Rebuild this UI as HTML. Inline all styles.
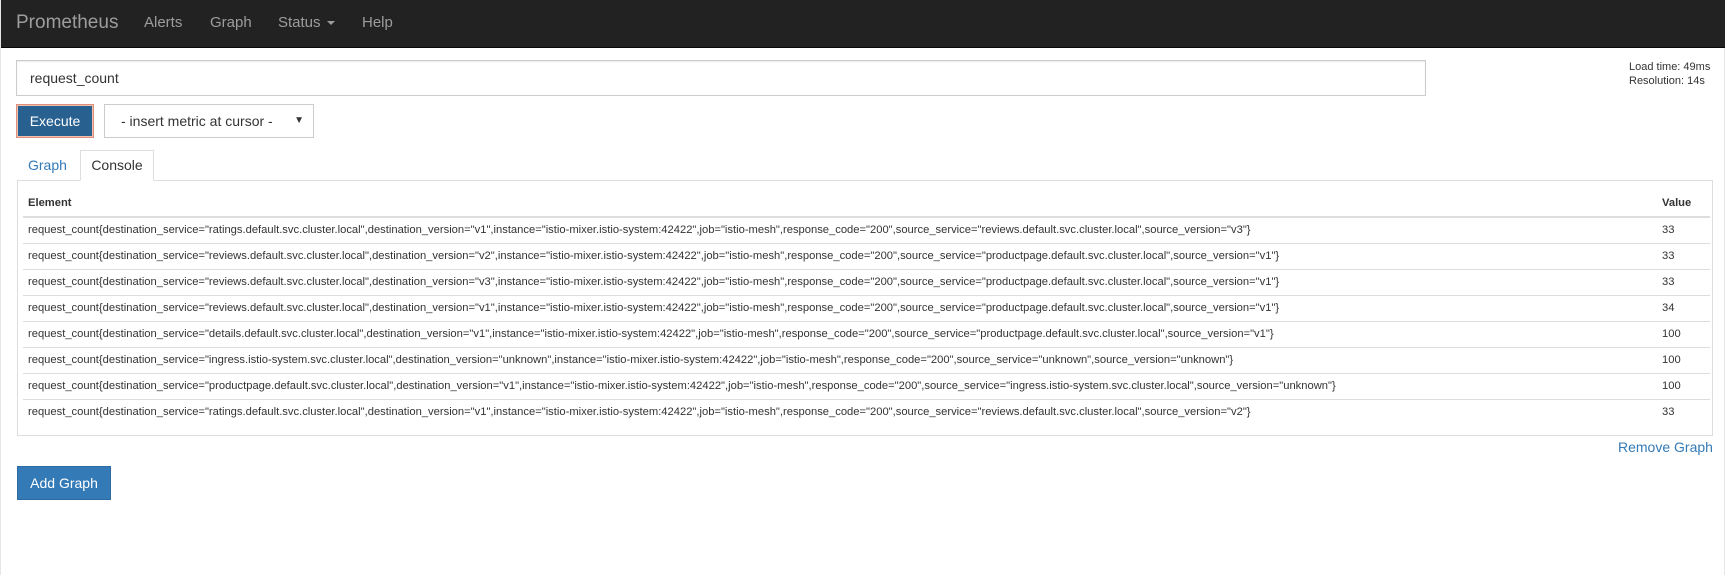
<!DOCTYPE html>
<html><head><style>
*{box-sizing:border-box;margin:0;padding:0}
body{width:1725px;height:575px;background:#fff;font-family:"Liberation Sans",Arial,sans-serif;color:#333;position:relative;overflow:hidden;border-left:1px solid #e6e6e6;border-right:1px solid #e6e6e6}
.a{position:absolute;white-space:nowrap}
.nav{position:absolute;left:0;top:0;width:1725px;height:48px;background:#222;border-bottom:1px solid #080808}
.nav span{position:absolute;top:0;line-height:46px;color:#9d9d9d;font-size:15px}
.row{position:absolute;left:22px;width:1687px;height:26px;border-top:1px solid #ddd;font-size:11.2px;line-height:25px}
.row .e{position:absolute;left:5px}
.row .v{position:absolute;left:1639px}
</style></head><body>
<div class="nav">
<span style="left:15px;font-size:19px">Prometheus</span>
<span style="left:143px">Alerts</span>
<span style="left:209px">Graph</span>
<span style="left:277px">Status <span style="position:relative;display:inline-block;width:0;height:0;border-left:4px solid transparent;border-right:4px solid transparent;border-top:4px solid #9d9d9d;top:-2px;margin-left:2px;line-height:0"></span></span>
<span style="left:361px">Help</span>
</div>
<div class="a" style="left:15px;top:60px;width:1410px;height:36px;border:1px solid #ccc;box-shadow:inset 0 1px 1px rgba(0,0,0,.075);font-size:14px;line-height:34px;padding-left:13px">request_count</div>
<div class="a" style="left:1628px;top:60px;font-size:11px;line-height:14px">Load time: 49ms<br>Resolution: 14s</div>
<div class="a" style="left:15px;top:104px;width:78px;height:34px;background:#286090;border:1px solid #e08e79;box-shadow:0 0 0 1px #f0c0b0 inset;color:#fff;font-size:14px;line-height:32px;text-align:center">Execute</div>
<div class="a" style="left:103px;top:104px;width:210px;height:34px;border:1px solid #ccc;font-size:14px;line-height:32px;padding-left:16px">- insert metric at cursor -<span style="position:absolute;right:9px;font-size:10px">▼</span></div>
<div class="a" style="left:27px;top:151px;font-size:14px;line-height:29px;color:#337ab7">Graph</div>
<div class="a" style="left:79px;top:150px;width:74px;height:31px;border:1px solid #ddd;border-bottom-color:#fff;background:#fff;font-size:14px;line-height:29px;text-align:center;z-index:2">Console</div>
<div class="a" style="left:16px;top:180px;width:1696px;height:256px;border:1px solid #ddd"></div>
<div class="a" style="left:27px;top:195px;font-size:11.2px;font-weight:bold;line-height:16px">Element</div>
<div class="a" style="left:1661px;top:195px;font-size:11.2px;font-weight:bold;line-height:16px">Value</div>
<div class="a" style="left:22px;top:216px;width:1687px;height:2px;background:#ddd"></div>
<div class="row" style="top:218px;border-top:none"><span class="e">request_count{destination_service="ratings.default.svc.cluster.local",destination_version="v1",instance="istio-mixer.istio-system:42422",job="istio-mesh",response_code="200",source_service="reviews.default.svc.cluster.local",source_version="v3"}</span><span class="v">33</span></div>
<div class="row" style="top:243px"><span class="e">request_count{destination_service="reviews.default.svc.cluster.local",destination_version="v2",instance="istio-mixer.istio-system:42422",job="istio-mesh",response_code="200",source_service="productpage.default.svc.cluster.local",source_version="v1"}</span><span class="v">33</span></div>
<div class="row" style="top:269px"><span class="e">request_count{destination_service="reviews.default.svc.cluster.local",destination_version="v3",instance="istio-mixer.istio-system:42422",job="istio-mesh",response_code="200",source_service="productpage.default.svc.cluster.local",source_version="v1"}</span><span class="v">33</span></div>
<div class="row" style="top:295px"><span class="e">request_count{destination_service="reviews.default.svc.cluster.local",destination_version="v1",instance="istio-mixer.istio-system:42422",job="istio-mesh",response_code="200",source_service="productpage.default.svc.cluster.local",source_version="v1"}</span><span class="v">34</span></div>
<div class="row" style="top:321px"><span class="e">request_count{destination_service="details.default.svc.cluster.local",destination_version="v1",instance="istio-mixer.istio-system:42422",job="istio-mesh",response_code="200",source_service="productpage.default.svc.cluster.local",source_version="v1"}</span><span class="v">100</span></div>
<div class="row" style="top:347px"><span class="e">request_count{destination_service="ingress.istio-system.svc.cluster.local",destination_version="unknown",instance="istio-mixer.istio-system:42422",job="istio-mesh",response_code="200",source_service="unknown",source_version="unknown"}</span><span class="v">100</span></div>
<div class="row" style="top:373px"><span class="e">request_count{destination_service="productpage.default.svc.cluster.local",destination_version="v1",instance="istio-mixer.istio-system:42422",job="istio-mesh",response_code="200",source_service="ingress.istio-system.svc.cluster.local",source_version="unknown"}</span><span class="v">100</span></div>
<div class="row" style="top:399px"><span class="e">request_count{destination_service="ratings.default.svc.cluster.local",destination_version="v1",instance="istio-mixer.istio-system:42422",job="istio-mesh",response_code="200",source_service="reviews.default.svc.cluster.local",source_version="v2"}</span><span class="v">33</span></div>
<div class="a" style="left:1617px;top:437px;font-size:14px;line-height:20px;color:#337ab7">Remove Graph</div>
<div class="a" style="left:16px;top:466px;width:94px;height:34px;background:#337ab7;border:1px solid #2e6da4;color:#fff;font-size:14px;line-height:32px;text-align:center">Add Graph</div>
</body></html>
